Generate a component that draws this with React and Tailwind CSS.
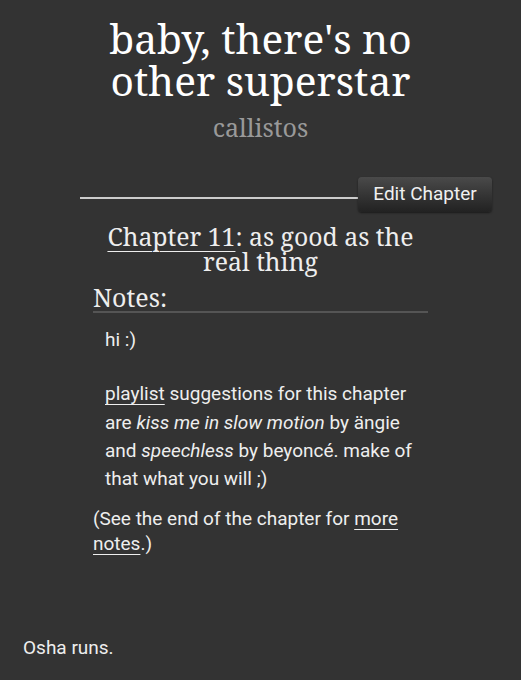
export default function App() {
  const serif = { fontFamily: '"Noto Serif", "DejaVu Serif", serif' };
  const sans = { fontFamily: 'Roboto, "Liberation Sans", sans-serif' };
  return (
    <div className="min-h-[680px] w-full bg-[#333333] text-[#eeeeee] overflow-hidden" style={sans}>
      <div className="flex flex-col items-center pt-[17px]">
        <h1 className="text-center text-[40.7px] leading-[42px] text-white" style={serif}>
          baby, there's no
          <br />
          other superstar
        </h1>
        <div className="mt-[11px] text-[25px] leading-[30px] text-[#999999]" style={serif}>
          callistos
        </div>
      </div>

      <div className="mt-[35px] flex items-start pl-[80px] pr-[29px]">
        <div className="mt-[20px] h-[2px] flex-1 bg-[#cccccc]" />
        <button className="h-[35px] w-[134px] rounded-[4px] bg-gradient-to-b from-[#4a4a4a] to-[#222222] text-[19px] text-[#f0f0f0] shadow-[0_1px_2px_rgba(0,0,0,0.5)]">
          Edit Chapter
        </button>
      </div>

      <h2 className="mt-[12px] text-center text-[24.8px] leading-[25px] text-[#eeeeee]" style={serif}>
        <span className="underline decoration-1 underline-offset-[5px]">Chapter 11</span>: as good as the
        <br />
        real thing
      </h2>

      <div className="mx-auto mt-[9px] w-[335px]">
        <div className="border-b-2 border-[#555555] text-[25px] leading-[28px] text-[#eeeeee]" style={serif}>
          Notes:
        </div>
        <div className="mt-[13px] pl-[12px] text-[19px] leading-[28.3px] text-[#eeeeee]">
          <p>hi :)</p>
          <p className="mt-[26px]">
            <span className="underline decoration-1 underline-offset-[4px]">playlist</span> suggestions for this chapter are{' '}
            <em>kiss me in slow motion</em> by ängie and <em>speechless</em> by beyoncé. make of that what you will ;)
          </p>
        </div>
        <p className="mt-[13px] text-[19px] leading-[25px] text-[#eeeeee]">
          (See the end of the chapter for{' '}
          <span className="underline decoration-1 underline-offset-[4px]">more notes</span>.)
        </p>
      </div>

      <p className="mt-[78px] pl-[23px] text-[19px] leading-[28px] text-[#eeeeee]">Osha runs.</p>
    </div>
  );
}
